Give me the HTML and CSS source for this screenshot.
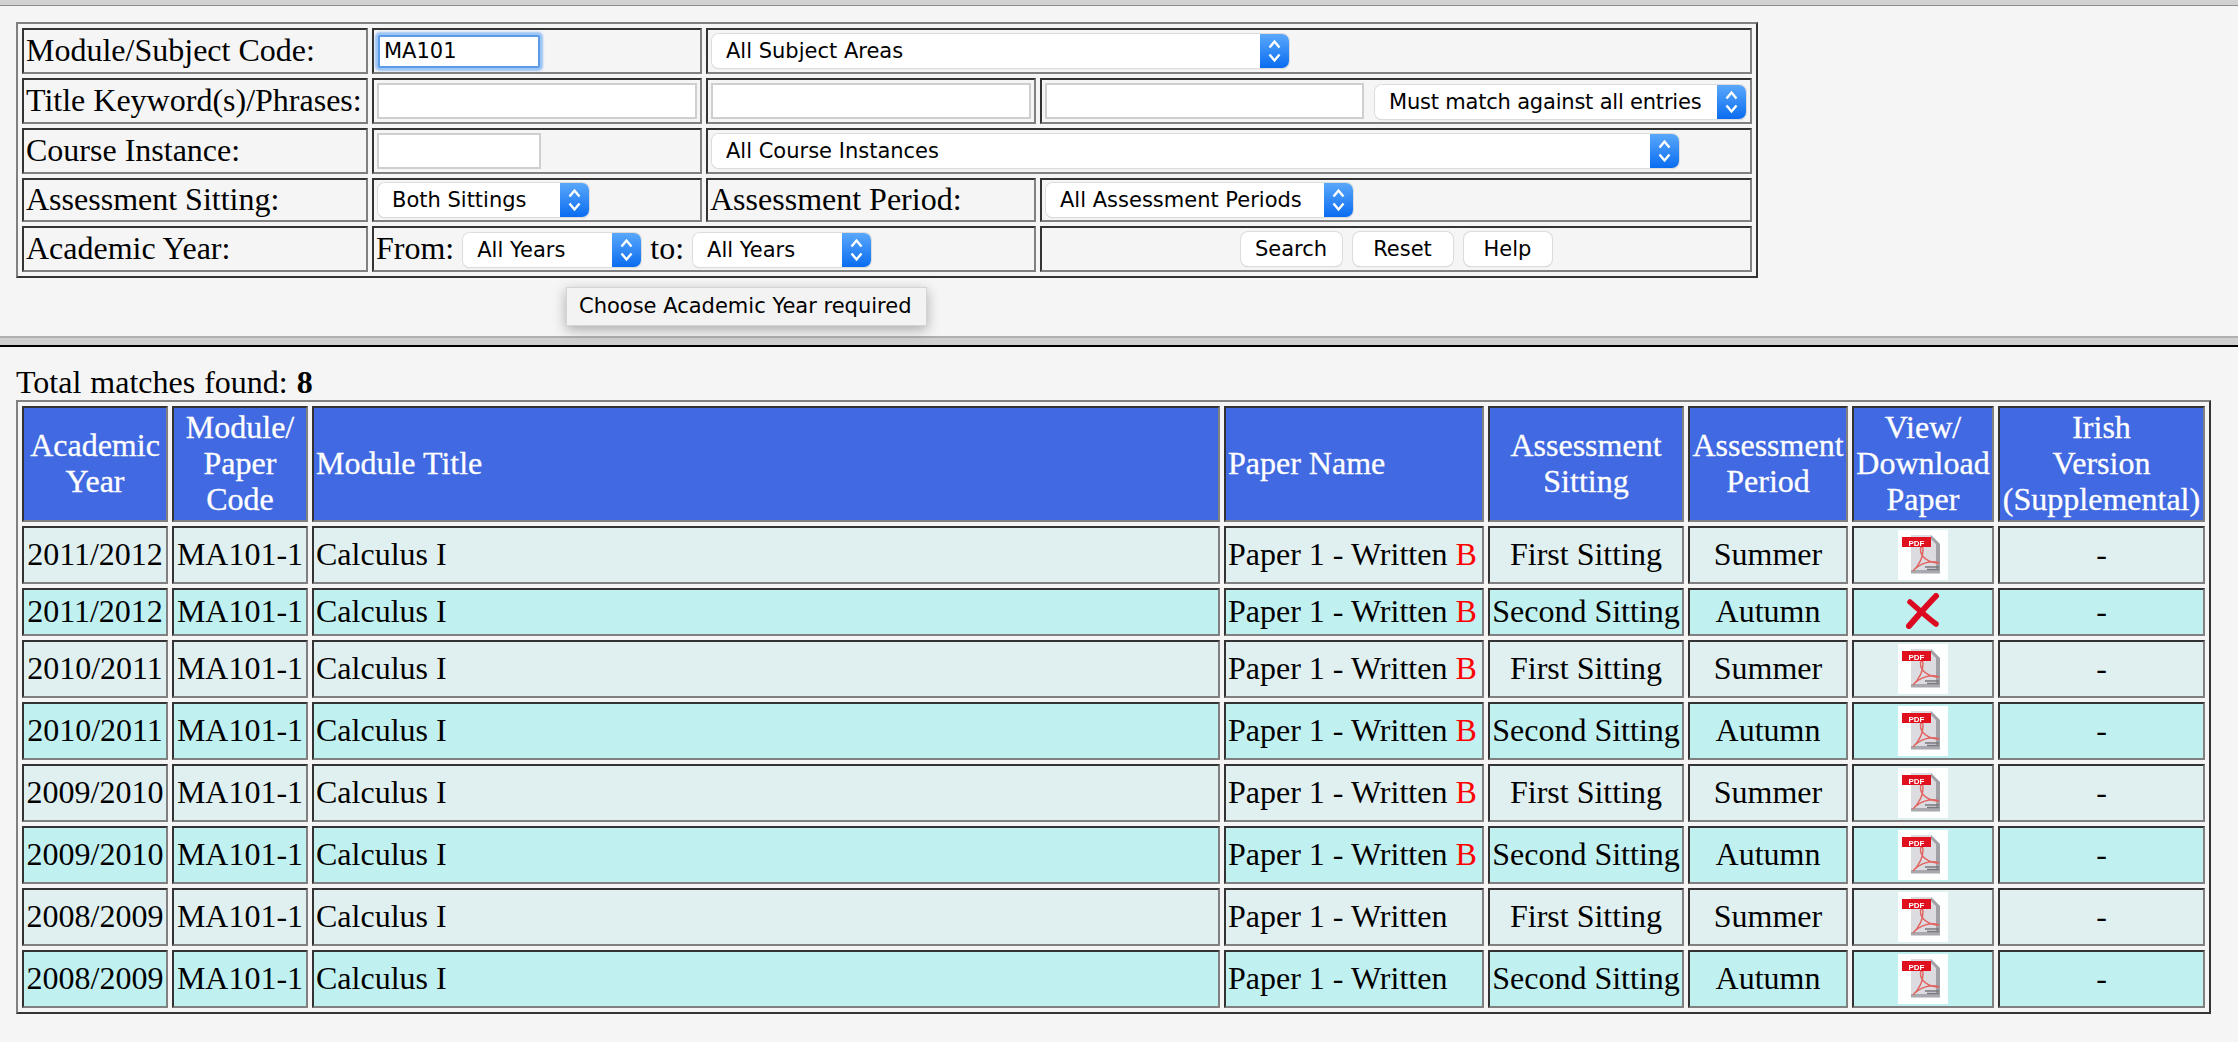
FILE: index.html
```html
<!DOCTYPE html>
<html lang="en">
<head>
    <meta charset="UTF-8">
    <title>Exam Papers Search</title>
    <link rel="stylesheet" href="styles.css">
</head>
<body>
    <svg class="defs" width="0" height="0">
        <symbol id="chevrons" viewBox="0 0 29 34">
            <path d="M9.5 13.5 14.5 7.5 19.5 13.5M9.5 20.5 14.5 26.5 19.5 20.5" fill="none" stroke="#fff" stroke-width="2.4"/>
        </symbol>
        <symbol id="pdf" viewBox="0 0 50 50">
            <rect width="50" height="50" fill="#fdfefe"/>
            <path d="M13 5H33L42 14V43H13Z" fill="#dcdce0"/>
            <path d="M33 5 42 14V43H38V14L33 9Z" fill="#a0a0a6"/>
            <path d="M13 40H42V43.5H13Z" fill="#a8a8ae"/>
            <path d="M15 41C20 36 25 28 25 20 25 16 22.500 16 22.500 20 22.500 27 31 33 41 33 33 30 22 33 15 41Z" fill="none" stroke="#e2625f" stroke-width="1.400"/>
            <rect x="4" y="7" width="29" height="10" fill="#e0101e"/>
            <path d="M27 37H41M29 39.500H41" stroke="#77777d" stroke-width="1.500"/>
        </symbol>
    </svg>

    <div class="top-strip"></div>

    <section class="search-pane">
        <form>
            <table class="search-table">
                <colgroup>
                    <col class="sc1"><col class="sc2"><col class="sc3"><col class="sc4">
                </colgroup>
                <tr>
                    <td>Module/Subject Code:</td>
                    <td><input type="text" class="code-input focused" value="MA101"></td>
                    <td colspan="2">
                        <span class="sel sel-subject"><select><option>All Subject Areas</option></select><span class="sel-btn"><svg width="29" height="34"><use href="#chevrons"/></svg></span></span>
                    </td>
                </tr>
                <tr>
                    <td>Title Keyword(s)/Phrases:</td>
                    <td><input type="text" class="wide-input"></td>
                    <td><input type="text" class="wide-input"></td>
                    <td>
                        <div class="cell-row gap-wide">
                            <input type="text" class="wide-input">
                            <span class="sel sel-match"><select><option>Must match against all entries</option></select><span class="sel-btn"><svg width="29" height="34"><use href="#chevrons"/></svg></span></span>
                        </div>
                    </td>
                </tr>
                <tr>
                    <td>Course Instance:</td>
                    <td><input type="text" class="code-input"></td>
                    <td colspan="2">
                        <span class="sel sel-course"><select><option>All Course Instances</option></select><span class="sel-btn"><svg width="29" height="34"><use href="#chevrons"/></svg></span></span>
                    </td>
                </tr>
                <tr class="short-row">
                    <td>Assessment Sitting:</td>
                    <td>
                        <span class="sel sel-sitting"><select><option>Both Sittings</option></select><span class="sel-btn"><svg width="29" height="34"><use href="#chevrons"/></svg></span></span>
                    </td>
                    <td>Assessment Period:</td>
                    <td>
                        <span class="sel sel-period"><select><option>All Assessment Periods</option></select><span class="sel-btn"><svg width="29" height="34"><use href="#chevrons"/></svg></span></span>
                    </td>
                </tr>
                <tr>
                    <td>Academic Year:</td>
                    <td colspan="2">
                        <div class="cell-row">
                            From:
                            <span class="sel sel-year"><select><option>All Years</option></select><span class="sel-btn"><svg width="29" height="34"><use href="#chevrons"/></svg></span></span>
                            to:
                            <span class="sel sel-year"><select><option>All Years</option></select><span class="sel-btn"><svg width="29" height="34"><use href="#chevrons"/></svg></span></span>
                        </div>
                    </td>
                    <td>
                        <div class="cell-row buttons">
                            <button type="button" class="btn-search">Search</button>
                            <button type="button" class="btn-reset">Reset</button>
                            <button type="button" class="btn-help">Help</button>
                        </div>
                    </td>
                </tr>
            </table>
        </form>
        <div class="tooltip">Choose Academic Year required</div>
    </section>

    <div class="divider"></div>

    <section class="results-pane">
        <div class="total">Total matches found: <b>8</b></div>
        <table class="results-table">
            <colgroup>
                <col class="rc1"><col class="rc2"><col class="rc3"><col class="rc4"><col class="rc5"><col class="rc6"><col class="rc7"><col class="rc8">
            </colgroup>
            <tr class="head-row">
                <th>Academic<br>Year</th>
                <th>Module/<br>Paper<br>Code</th>
                <th class="left">Module Title</th>
                <th class="left">Paper Name</th>
                <th>Assessment<br>Sitting</th>
                <th>Assessment<br>Period</th>
                <th>View/<br>Download<br>Paper</th>
                <th>Irish<br>Version<br>(Supplemental)</th>
            </tr>
            <tr class="odd">
                <td>2011/2012</td><td>MA101-1</td><td class="left">Calculus I</td>
                <td class="left">Paper 1 - Written <span class="red">B</span></td>
                <td>First Sitting</td><td>Summer</td>
                <td><svg class="pdf-icon" viewBox="0 0 50 50"><use href="#pdf"/><text x="18.500" y="15.500" class="pdf-label">PDF</text></svg></td><td>-</td>
            </tr>
            <tr class="even no-paper">
                <td>2011/2012</td><td>MA101-1</td><td class="left">Calculus I</td>
                <td class="left">Paper 1 - Written <span class="red">B</span></td>
                <td>Second Sitting</td><td>Autumn</td>
                <td>
                    <svg class="cross-icon" viewBox="0 0 34 36">
                        <path d="M3 33C11 24 21 12 30 3" fill="none" stroke="#dc0a20" stroke-width="6" stroke-linecap="round"/>
                        <path d="M4 9C11 15 22 25 30 31" fill="none" stroke="#dc0a20" stroke-width="5.500" stroke-linecap="round"/>
                    </svg>
                </td><td>-</td>
            </tr>
            <tr class="odd">
                <td>2010/2011</td><td>MA101-1</td><td class="left">Calculus I</td>
                <td class="left">Paper 1 - Written <span class="red">B</span></td>
                <td>First Sitting</td><td>Summer</td>
                <td><svg class="pdf-icon" viewBox="0 0 50 50"><use href="#pdf"/><text x="18.500" y="15.500" class="pdf-label">PDF</text></svg></td><td>-</td>
            </tr>
            <tr class="even">
                <td>2010/2011</td><td>MA101-1</td><td class="left">Calculus I</td>
                <td class="left">Paper 1 - Written <span class="red">B</span></td>
                <td>Second Sitting</td><td>Autumn</td>
                <td><svg class="pdf-icon" viewBox="0 0 50 50"><use href="#pdf"/><text x="18.500" y="15.500" class="pdf-label">PDF</text></svg></td><td>-</td>
            </tr>
            <tr class="odd">
                <td>2009/2010</td><td>MA101-1</td><td class="left">Calculus I</td>
                <td class="left">Paper 1 - Written <span class="red">B</span></td>
                <td>First Sitting</td><td>Summer</td>
                <td><svg class="pdf-icon" viewBox="0 0 50 50"><use href="#pdf"/><text x="18.500" y="15.500" class="pdf-label">PDF</text></svg></td><td>-</td>
            </tr>
            <tr class="even">
                <td>2009/2010</td><td>MA101-1</td><td class="left">Calculus I</td>
                <td class="left">Paper 1 - Written <span class="red">B</span></td>
                <td>Second Sitting</td><td>Autumn</td>
                <td><svg class="pdf-icon" viewBox="0 0 50 50"><use href="#pdf"/><text x="18.500" y="15.500" class="pdf-label">PDF</text></svg></td><td>-</td>
            </tr>
            <tr class="odd">
                <td>2008/2009</td><td>MA101-1</td><td class="left">Calculus I</td>
                <td class="left">Paper 1 - Written</td>
                <td>First Sitting</td><td>Summer</td>
                <td><svg class="pdf-icon" viewBox="0 0 50 50"><use href="#pdf"/><text x="18.500" y="15.500" class="pdf-label">PDF</text></svg></td><td>-</td>
            </tr>
            <tr class="even">
                <td>2008/2009</td><td>MA101-1</td><td class="left">Calculus I</td>
                <td class="left">Paper 1 - Written</td>
                <td>Second Sitting</td><td>Autumn</td>
                <td><svg class="pdf-icon" viewBox="0 0 50 50"><use href="#pdf"/><text x="18.500" y="15.500" class="pdf-label">PDF</text></svg></td><td>-</td>
            </tr>
        </table>
    </section>
</body>
</html>
```

FILE: styles.css
```css
* {
    box-sizing: border-box;
}
body {
    margin: 0;
    background-color: #f5f5f5;
    color: #000;
    font-family: "Liberation Serif", serif;
    font-size: 32px;
    line-height: 36px;
    overflow: hidden;
}
.defs {
    display: block;
    height: 0;
}
.top-strip {
    height: 6px;
    background-color: #d2d2d2;
    border-bottom: 1px solid #8e8e8e;
}

/* search form */
.search-pane {
    position: relative;
    height: 330px;
    padding: 16px 16px 0;
}
table {
    table-layout: fixed;
    border-collapse: separate;
    border-spacing: 4px;
    border-style: solid;
    border-width: 2px;
    border-color: #808080 #333 #333 #808080;
}
td, th {
    padding: 1px 2px 3px;
    border-style: solid;
    border-width: 2px;
    border-color: #333 #808080 #808080 #333;
    white-space: nowrap;
}
.search-table {
    width: 1742px;
}
.search-table tr {
    height: 46px;
}
.search-table tr.short-row {
    height: 44px;
}
.sc1 { width: 346px; }
.sc2 { width: 330px; }
.sc3 { width: 330px; }
.sc4 { width: 712px; }

.cell-row {
    display: flex;
    align-items: center;
    gap: 7px;
}
.cell-row.gap-wide {
    gap: 9px;
}
.cell-row.buttons {
    justify-content: center;
    gap: 11px;
}
input[type="text"] {
    display: block;
    height: 36px;
    margin: 2px 0 0 1px;
    padding: 0 4px;
    border: 2px solid #cfcfcf;
    background-color: #fff;
    font-family: "DejaVu Sans", sans-serif;
    font-size: 21px;
    color: #000;
}
.code-input {
    width: 164px;
}
.wide-input {
    width: 320px;
}
input.focused {
    margin-left: 2px;
    height: 33px;
    width: 162px;
    border: 2px solid #5c9bea;
    border-radius: 2px;
    box-shadow: 0 0 2px 3px #9cc4f5;
}
.sel {
    display: flex;
    flex: none;
    height: 34px;
    margin: 1px 2px 0;
    border-radius: 7px;
    background-color: #fff;
    box-shadow: 0 0 0 1px #dcdcdc, 0 1px 1px #bdbdbd;
}
.cell-row .sel {
    margin-top: 3px;
}
.sel select {
    flex: 1;
    min-width: 0;
    height: 34px;
    padding: 0 0 0 14px;
    border: none;
    border-radius: 7px 0 0 7px;
    background-color: #fff;
    appearance: none;
    font-family: "DejaVu Sans", sans-serif;
    font-size: 21px;
    color: #000;
}
.sel-btn {
    flex: none;
    width: 29px;
    height: 34px;
    border-radius: 0 7px 7px 0;
    background: linear-gradient(#5aa8fb, #0a6cf0);
}
.sel-btn svg {
    display: block;
}
.sel-subject { width: 577px; }
.sel-match { width: 371px; }
.sel-match select {
    letter-spacing: -0.2px;
}
.sel-course { width: 967px; }
.sel-sitting { width: 211px; }
.sel-period { width: 307px; }
.sel-year { width: 178px; }

button {
    height: 34px;
    margin-top: 2px;
    padding: 0;
    border: none;
    border-radius: 7px;
    background-color: #fff;
    box-shadow: 0 0 0 1px #dcdcdc, 0 1px 1px #bdbdbd;
    font-family: "DejaVu Sans", sans-serif;
    font-size: 21px;
    color: #000;
}
.btn-search { width: 101px; }
.btn-reset { width: 100px; }
.btn-help { width: 88px; }

.tooltip {
    position: absolute;
    left: 566px;
    top: 281px;
    width: 361px;
    height: 39px;
    padding-left: 12px;
    border: 1px solid #d4d4d4;
    background-color: #f3f3f3;
    box-shadow: 0 4px 12px rgba(0, 0, 0, 0.3);
    font-family: "DejaVu Sans", sans-serif;
    font-size: 21px;
    line-height: 37px;
}

.divider {
    height: 11px;
    background-color: #d0d0d0;
    border-top: 2px solid #b0b0b0;
    border-bottom: 2px solid #000;
}

/* results */
.results-pane {
    padding: 17px 16px 0;
}
.total {
    word-spacing: 1px;
}
.results-table {
    width: 2195px;
}
.rc1 { width: 146px; }
.rc2 { width: 136px; }
.rc3 { width: 908px; }
.rc4 { width: 260px; }
.rc5 { width: 196px; }
.rc6 { width: 160px; }
.rc7 { width: 142px; }
.rc8 { width: 207px; }

.results-table th, .results-table td {
    text-align: center;
}
.results-table .left {
    text-align: left;
}
.head-row {
    height: 116px;
}
.results-table th {
    background-color: #4169e1;
    color: #fff;
    font-weight: normal;
    -webkit-text-stroke: 0.3px #fff;
}
.results-table tr.odd, .results-table tr.even {
    height: 58px;
}
.results-table tr.no-paper {
    height: 48px;
}
.odd td {
    background-color: #e0f0f0;
}
.even td {
    background-color: #c0f0f0;
}
.red {
    color: #f00;
}
.pdf-icon {
    display: block;
    width: 50px;
    height: 50px;
    margin: 1px auto -1px;
    filter: blur(0.6px);
}
.pdf-label {
    fill: #fff;
    font-family: "Liberation Sans", sans-serif;
    font-size: 8px;
    font-weight: bold;
    text-anchor: middle;
}
.cross-icon {
    display: block;
    width: 34px;
    height: 36px;
    margin: 0 auto;
    filter: blur(0.6px);
}
```
